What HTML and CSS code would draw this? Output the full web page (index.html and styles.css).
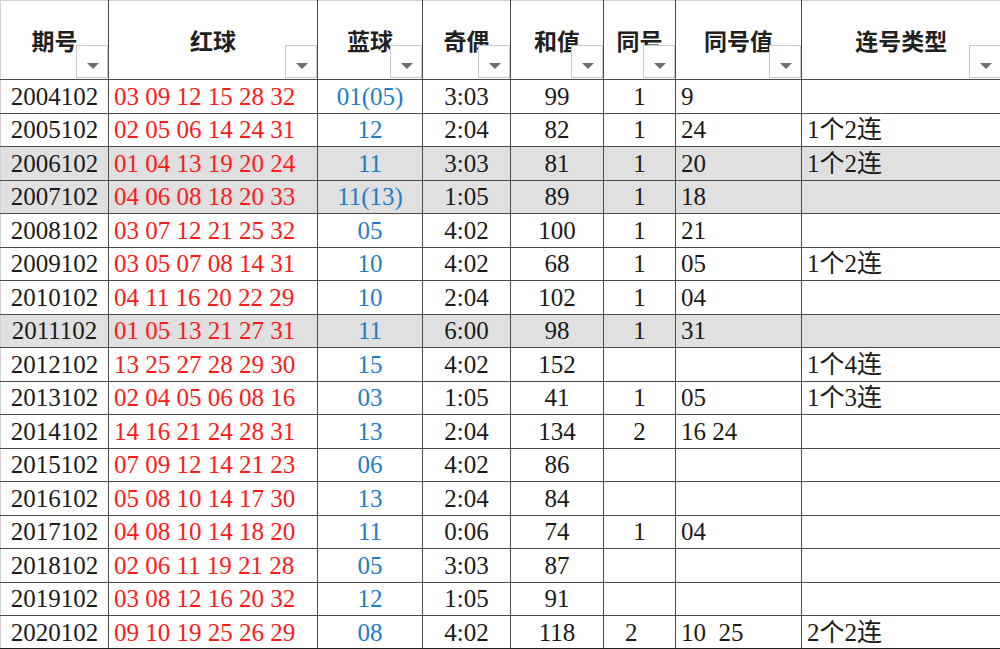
FILE: index.html
```html
<!DOCTYPE html>
<html lang="zh">
<head>
<meta charset="utf-8">
<title>期号表</title>
<link rel="stylesheet" href="styles.css">
</head>
<body>
<table class="sheet">
  <colgroup>
    <col class="c1"><col class="c2"><col class="c3"><col class="c4"><col class="c5"><col class="c6"><col class="c7"><col class="c8">
  </colgroup>
  <thead>
    <tr>
      <th><span class="ht">期号</span><span class="dd"></span></th>
      <th><span class="ht">红球</span><span class="dd"></span></th>
      <th><span class="ht">蓝球</span><span class="dd"></span></th>
      <th><span class="ht">奇偶</span><span class="dd"></span></th>
      <th><span class="ht">和值</span><span class="dd"></span></th>
      <th><span class="ht">同号</span><span class="dd"></span></th>
      <th><span class="ht">同号值</span><span class="dd"></span></th>
      <th><span class="ht">连号类型</span><span class="dd"></span></th>
    </tr>
  </thead>
  <tbody>
    <tr><td class="id">2004102</td><td class="red">03 09 12 15 28 32</td><td class="blue">01(05)</td><td class="ctr">3:03</td><td class="ctr">99</td><td class="ctr">1</td><td class="lft">9</td><td class="lft"></td></tr>
    <tr><td class="id">2005102</td><td class="red">02 05 06 14 24 31</td><td class="blue">12</td><td class="ctr">2:04</td><td class="ctr">82</td><td class="ctr">1</td><td class="lft">24</td><td class="lft">1个2连</td></tr>
    <tr class="hl"><td class="id">2006102</td><td class="red">01 04 13 19 20 24</td><td class="blue">11</td><td class="ctr">3:03</td><td class="ctr">81</td><td class="ctr">1</td><td class="lft">20</td><td class="lft">1个2连</td></tr>
    <tr class="hl"><td class="id">2007102</td><td class="red">04 06 08 18 20 33</td><td class="blue">11(13)</td><td class="ctr">1:05</td><td class="ctr">89</td><td class="ctr">1</td><td class="lft">18</td><td class="lft"></td></tr>
    <tr><td class="id">2008102</td><td class="red">03 07 12 21 25 32</td><td class="blue">05</td><td class="ctr">4:02</td><td class="ctr">100</td><td class="ctr">1</td><td class="lft">21</td><td class="lft"></td></tr>
    <tr><td class="id">2009102</td><td class="red">03 05 07 08 14 31</td><td class="blue">10</td><td class="ctr">4:02</td><td class="ctr">68</td><td class="ctr">1</td><td class="lft">05</td><td class="lft">1个2连</td></tr>
    <tr><td class="id">2010102</td><td class="red">04 11 16 20 22 29</td><td class="blue">10</td><td class="ctr">2:04</td><td class="ctr">102</td><td class="ctr">1</td><td class="lft">04</td><td class="lft"></td></tr>
    <tr class="hl"><td class="id">2011102</td><td class="red">01 05 13 21 27 31</td><td class="blue">11</td><td class="ctr">6:00</td><td class="ctr">98</td><td class="ctr">1</td><td class="lft">31</td><td class="lft"></td></tr>
    <tr><td class="id">2012102</td><td class="red">13 25 27 28 29 30</td><td class="blue">15</td><td class="ctr">4:02</td><td class="ctr">152</td><td class="ctr"></td><td class="lft"></td><td class="lft">1个4连</td></tr>
    <tr><td class="id">2013102</td><td class="red">02 04 05 06 08 16</td><td class="blue">03</td><td class="ctr">1:05</td><td class="ctr">41</td><td class="ctr">1</td><td class="lft">05</td><td class="lft">1个3连</td></tr>
    <tr><td class="id">2014102</td><td class="red">14 16 21 24 28 31</td><td class="blue">13</td><td class="ctr">2:04</td><td class="ctr">134</td><td class="ctr">2</td><td class="lft">16 24</td><td class="lft"></td></tr>
    <tr><td class="id">2015102</td><td class="red">07 09 12 14 21 23</td><td class="blue">06</td><td class="ctr">4:02</td><td class="ctr">86</td><td class="ctr"></td><td class="lft"></td><td class="lft"></td></tr>
    <tr><td class="id">2016102</td><td class="red">05 08 10 14 17 30</td><td class="blue">13</td><td class="ctr">2:04</td><td class="ctr">84</td><td class="ctr"></td><td class="lft"></td><td class="lft"></td></tr>
    <tr><td class="id">2017102</td><td class="red">04 08 10 14 18 20</td><td class="blue">11</td><td class="ctr">0:06</td><td class="ctr">74</td><td class="ctr">1</td><td class="lft">04</td><td class="lft"></td></tr>
    <tr><td class="id">2018102</td><td class="red">02 06 11 19 21 28</td><td class="blue">05</td><td class="ctr">3:03</td><td class="ctr">87</td><td class="ctr"></td><td class="lft"></td><td class="lft"></td></tr>
    <tr><td class="id">2019102</td><td class="red">03 08 12 16 20 32</td><td class="blue">12</td><td class="ctr">1:05</td><td class="ctr">91</td><td class="ctr"></td><td class="lft"></td><td class="lft"></td></tr>
    <tr><td class="id">2020102</td><td class="red">09 10 19 25 26 29</td><td class="blue">08</td><td class="ctr">4:02</td><td class="ctr">118</td><td class="ctr two">2</td><td class="lft pre">10  25</td><td class="lft">2个2连</td></tr>
  </tbody>
</table>
</body>
</html>
```

FILE: styles.css
```css
html, body {
  margin: 0;
  padding: 0;
  background: #ffffff;
}

.sheet {
  border-collapse: collapse;
  table-layout: fixed;
  width: 1000px;
  font-family: "Liberation Serif", "Noto Sans CJK SC", serif;
  font-size: 25px;
  color: #1a1a1a;
}

.c1 { width: 108px; }
.c2 { width: 209px; }
.c3 { width: 105px; }
.c4 { width: 88px; }
.c5 { width: 93px; }
.c6 { width: 72px; }
.c7 { width: 126px; }
.c8 { width: 199px; }

.sheet thead tr {
  height: 79px;
}

.sheet th {
  position: relative;
  border: 1px solid #4a4a4a;
  border-top: 1px solid #d0d0d0;
  padding: 0;
  text-align: center;
  vertical-align: middle;
  font-family: "Noto Sans CJK SC", sans-serif;
  font-weight: 600;
  font-size: 23px;
  color: #202020;
  line-height: 1;
}

.sheet th:first-child {
  border-left: 1px solid #d0d0d0;
}

.sheet th:last-child {
  border-right: none;
}

.ht {
  display: inline-block;
}

.dd {
  position: absolute;
  right: 0;
  bottom: 1px;
  width: 32px;
  height: 33px;
  box-sizing: border-box;
  background: #ffffff;
  border: 1px solid #c9c9c9;
}

.dd::after {
  content: "";
  position: absolute;
  left: 10px;
  top: 17px;
  border-left: 6px solid transparent;
  border-right: 6px solid transparent;
  border-top: 6px solid #6e6e6e;
}

.sheet tbody tr {
  height: 33.5px;
}

.sheet td {
  border: 1px solid #4a4a4a;
  padding: 0;
  line-height: 1;
  white-space: nowrap;
  overflow: hidden;
  font-family: "Liberation Serif", "Noto Sans CJK SC", serif;
}

.sheet td:first-child {
  border-left: 1px solid #d0d0d0;
}

.sheet td:last-child {
  border-right: none;
}

.sheet tbody tr:last-child td {
  border-bottom: 2px solid #222;
}

.sheet .hl td {
  background: #e0e0e0;
}

.sheet td.id {
  text-align: center;
}

.sheet td.red {
  color: #ff1a1a;
  padding-left: 5px;
}

.sheet td.blue {
  color: #1f7cc9;
  text-align: center;
}

.sheet td.ctr {
  text-align: center;
}

.sheet td.two {
  text-align: left;
  padding-left: 21px;
}

.sheet td.lft {
  text-align: left;
  padding-left: 5px;
}

.sheet td.pre {
  white-space: pre;
}
```
